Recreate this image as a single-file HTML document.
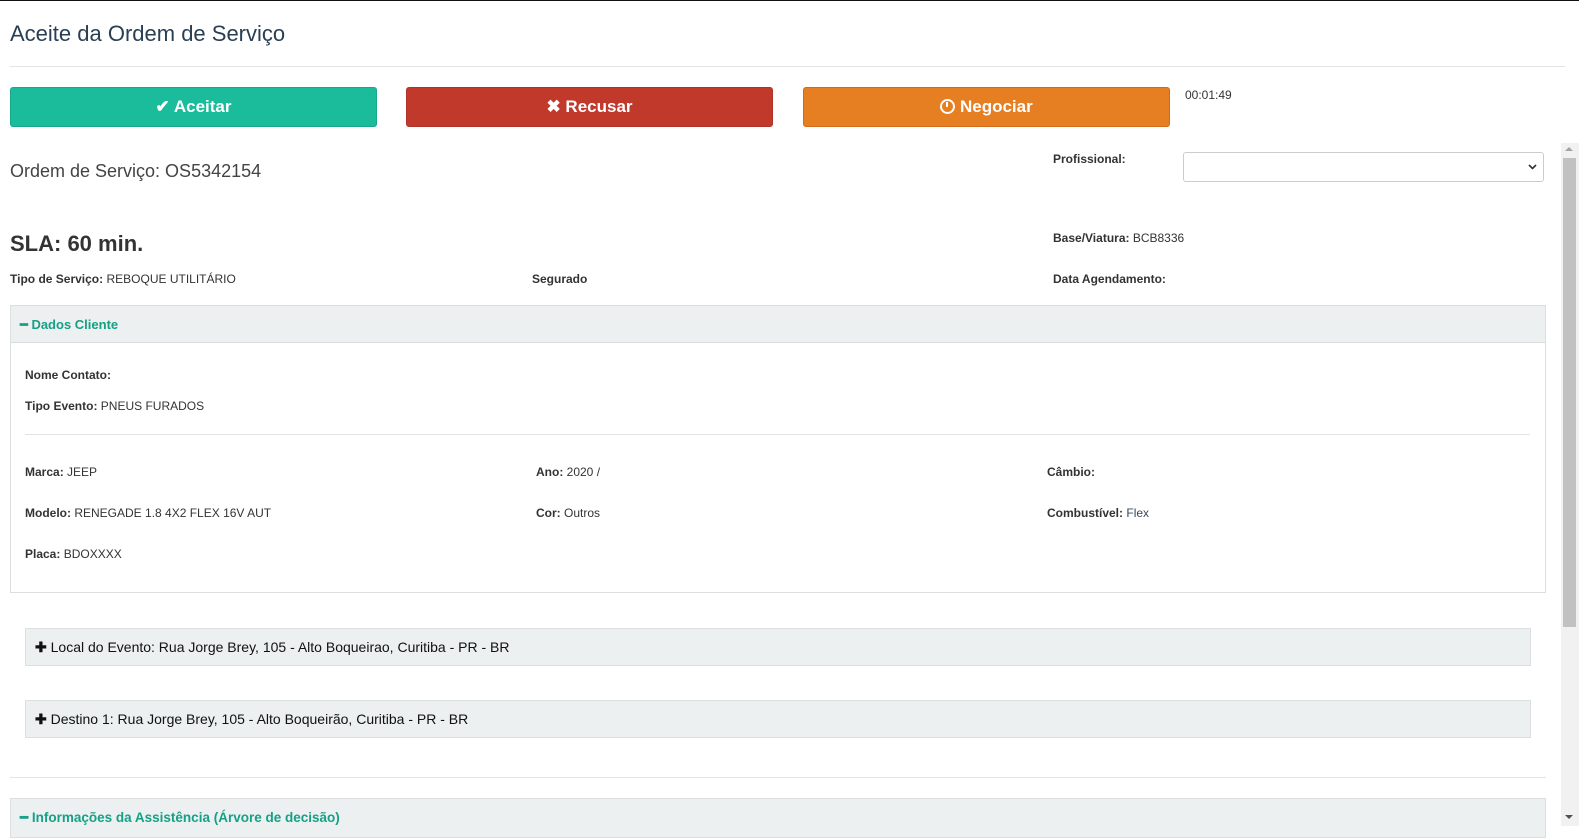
<!DOCTYPE html>
<html><head><meta charset="utf-8"><style>
*{box-sizing:border-box;margin:0;padding:0}
body{width:1579px;height:838px;overflow:hidden;background:#fff;font-family:"Liberation Sans",Arial,sans-serif;color:#333;position:relative}
.a{position:absolute;white-space:nowrap}
.b{font-weight:bold}
.btn{position:absolute;top:87px;height:40px;width:367px;border-radius:3px;color:#fff;font-weight:bold;font-size:17px;text-align:center;line-height:38px}
.s12{font-size:12px}
.box{position:absolute;background:#ecf0f1;border:1px solid #dcdfe0}
</style></head><body>
<div class="a" style="left:0;top:0;width:1579px;height:1px;background:#111"></div>
<div class="a" style="left:10px;top:21px;font-size:22px;color:#2a3f54">Aceite da Ordem de Serviço</div>
<div class="a" style="left:10px;top:66px;width:1555px;height:1px;background:#e3e3e3"></div>
<div class="btn" style="left:10px;background:#1abc9c;border:1px solid #17a88b">✔ Aceitar</div>
<div class="btn" style="left:406px;background:#c0392b;border:1px solid #b0332a">✖ Recusar</div>
<div class="btn" style="left:803px;background:#e67e22;border:1px solid #d4691a"><span style="display:inline-block;width:15px;height:15px;border:2.5px solid #fff;border-radius:50%;vertical-align:-2px;position:relative"><span style="position:absolute;left:4px;top:1px;width:2px;height:5px;background:#fff"></span></span> Negociar</div>
<div class="a s12" style="left:1185px;top:88px">00:01:49</div>
<div class="a" style="left:10px;top:161px;font-size:18px;color:#444">Ordem de Serviço: OS5342154</div>
<div class="a s12 b" style="left:1053px;top:152px">Profissional:</div>
<div class="a" style="left:1183px;top:152px;width:361px;height:30px;border:1px solid #ccc;border-radius:3px"><svg style="position:absolute;right:6px;top:11px" width="9" height="6" viewBox="0 0 9 6"><path d="M1 1l3.5 3.5L8 1" stroke="#333" stroke-width="1.6" fill="none"/></svg></div>
<div class="a b" style="left:10px;top:231px;font-size:22px;color:#333">SLA: 60 min.</div>
<div class="a s12" style="left:1053px;top:231px"><b>Base/Viatura:</b> BCB8336</div>
<div class="a s12" style="left:10px;top:272px"><b>Tipo de Serviço:</b> REBOQUE UTILITÁRIO</div>
<div class="a s12 b" style="left:532px;top:272px">Segurado</div>
<div class="a s12 b" style="left:1053px;top:272px">Data Agendamento:</div>
<div class="a" style="left:10px;top:305px;width:1536px;height:288px;border:1px solid #dcdfe0"></div>
<div class="box" style="left:10px;top:305px;width:1536px;height:38px"></div>
<div class="a b" style="left:20px;top:317px;font-size:13px;color:#16a085">━ Dados Cliente</div>
<div class="a s12 b" style="left:25px;top:368px">Nome Contato:</div>
<div class="a s12" style="left:25px;top:399px"><b>Tipo Evento:</b> PNEUS FURADOS</div>
<div class="a" style="left:25px;top:434px;width:1505px;height:1px;background:#e3e3e3"></div>
<div class="a s12" style="left:25px;top:465px"><b>Marca:</b> JEEP</div>
<div class="a s12" style="left:536px;top:465px"><b>Ano:</b> 2020 /</div>
<div class="a s12 b" style="left:1047px;top:465px">Câmbio:</div>
<div class="a s12" style="left:25px;top:506px"><b>Modelo:</b> RENEGADE 1.8 4X2 FLEX 16V AUT</div>
<div class="a s12" style="left:536px;top:506px"><b>Cor:</b> Outros</div>
<div class="a s12" style="left:1047px;top:506px"><b>Combustível:</b> <span style="color:#34495e">Flex</span></div>
<div class="a s12" style="left:25px;top:547px"><b>Placa:</b> BDOXXXX</div>
<div class="box" style="left:25px;top:628px;width:1506px;height:38px"></div>
<div class="a" style="left:35px;top:639px;font-size:14px;color:#111"><b>✚</b> Local do Evento: Rua Jorge Brey, 105 - Alto Boqueirao, Curitiba - PR - BR</div>
<div class="box" style="left:25px;top:700px;width:1506px;height:38px"></div>
<div class="a" style="left:35px;top:711px;font-size:14px;color:#111"><b>✚</b> Destino 1: Rua Jorge Brey, 105 - Alto Boqueirão, Curitiba - PR - BR</div>
<div class="a" style="left:10px;top:777px;width:1536px;height:1px;background:#e3e3e3"></div>
<div class="box" style="left:10px;top:798px;width:1536px;height:40px"></div>
<div class="a b" style="left:20px;top:810px;font-size:13.5px;color:#16a085">━ Informações da Assistência (Árvore de decisão)</div>
<div class="a" style="left:1561px;top:143px;width:18px;height:683px;background:#f1f1f1"></div>
<div class="a" style="left:1563px;top:158px;width:13px;height:469px;background:#c1c1c1"></div>
<div class="a" style="left:1565px;top:147px;width:0;height:0;border-left:4px solid transparent;border-right:4px solid transparent;border-bottom:4px solid #a3a3a3"></div>
<div class="a" style="left:1565px;top:815px;width:0;height:0;border-left:4px solid transparent;border-right:4px solid transparent;border-top:4px solid #505050"></div>
</body></html>
